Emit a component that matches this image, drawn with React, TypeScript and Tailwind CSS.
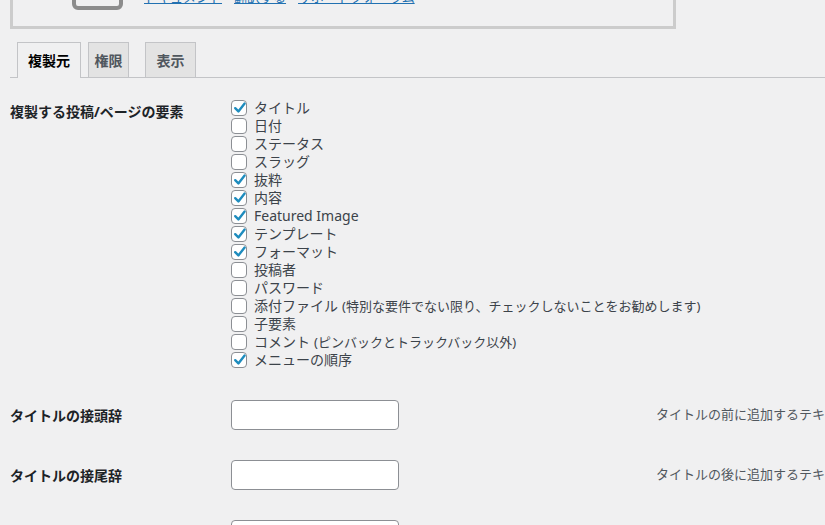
import React from 'react';

const font = { fontFamily: '"Noto Sans", "Noto Sans CJK JP", sans-serif' };

const elements: { label: string; note?: string; checked: boolean }[] = [
  { label: 'タイトル', checked: true },
  { label: '日付', checked: false },
  { label: 'ステータス', checked: false },
  { label: 'スラッグ', checked: false },
  { label: '抜粋', checked: true },
  { label: '内容', checked: true },
  { label: 'Featured Image', checked: true },
  { label: 'テンプレート', checked: true },
  { label: 'フォーマット', checked: true },
  { label: '投稿者', checked: false },
  { label: 'パスワード', checked: false },
  { label: '添付ファイル', note: '(特別な要件でない限り、チェックしないことをお勧めします)', checked: false },
  { label: '子要素', checked: false },
  { label: 'コメント', note: '(ピンバックとトラックバック以外)', checked: false },
  { label: 'メニューの順序', checked: true },
];

function Checkbox({ checked }: { checked: boolean }) {
  return (
    <span className="relative flex h-4 w-4 shrink-0 items-center justify-center rounded-[4px] border border-[#8c8f94] bg-white">
      {checked && (
        <svg viewBox="0 0 16 16" className="absolute -top-[1px] left-0 h-4 w-4">
          <path d="M3.2 8.2 L6.4 11.4 L12.6 3.6" fill="none" stroke="#1e8cbe" strokeWidth="2.4" strokeLinecap="round" strokeLinejoin="round" />
        </svg>
      )}
    </span>
  );
}

function TextRow({ label, desc }: { label: string; desc: string }) {
  return (
    <div className="grid grid-cols-[221px_425px_1fr] items-center">
      <div className="text-[14px] font-bold text-[#1d2327]">{label}</div>
      <div>
        <input type="text" className="block h-[30px] w-[168px] rounded-[4px] border border-[#8c8f94] bg-white" />
      </div>
      <div className="whitespace-nowrap text-[13px] text-[#50575e]">{desc}</div>
    </div>
  );
}

export default function App() {
  return (
    <div className="h-[525px] w-[825px] overflow-hidden bg-[#f0f0f1] pl-[10px]" style={font}>
      {/* Plugin info box (cut off at top) */}
      <div className="-mt-[31px] flex h-[60px] w-[666px] items-end border-[3px] border-[#cccccc] pl-[59px]">
        <div className="mb-[16px] h-[40px] w-[51px] rounded-[6px] border-4 border-[#8c8c8c]" />
        <div className="mb-[21px] ml-[21px] flex gap-[12px] text-[13px] leading-[16px] text-[#2271b1]">
          <a className="underline">ドキュメント</a>
          <a className="underline">翻訳する</a>
          <a className="underline">サポートフォーラム</a>
        </div>
      </div>

      {/* Tabs */}
      <div className="mt-[13px] flex border-b border-[#c3c4c7] pl-[7px]">
        <div className="-mb-px flex h-[36px] w-[64px] items-center justify-center border border-b-0 border-[#c3c4c7] bg-[#f0f0f1] text-[14px] font-bold text-black">
          複製元
        </div>
        <div className="ml-[7px] flex h-[35px] w-[41px] items-center justify-center border border-[#c3c4c7] border-b-0 bg-[#e3e3e3] text-[14px] font-bold text-[#50575e]">
          権限
        </div>
        <div className="ml-[16px] flex h-[35px] w-[51px] items-center justify-center border border-[#c3c4c7] border-b-0 bg-[#e3e3e3] text-[14px] font-bold text-[#50575e]">
          表示
        </div>
      </div>

      {/* Elements to copy */}
      <div className="mt-[21px] grid grid-cols-[221px_1fr]">
        <div className="pt-[3px] text-[14px] font-bold leading-[20px] text-[#1d2327]">複製する投稿/ページの要素</div>
        <div className="flex flex-col">
          {elements.map((el, i) => (
            <label key={i} className="flex h-[18px] items-center gap-[7px] whitespace-nowrap text-[14px] leading-[18px] text-[#3c434a]">
              <Checkbox checked={el.checked} />
              <span>
                {el.label}
                {el.note && <span className="ml-[4px] text-[13px]">{el.note}</span>}
              </span>
            </label>
          ))}
        </div>
      </div>

      {/* Text fields */}
      <div className="mt-[31px] flex flex-col gap-[30px]">
        <TextRow label="タイトルの接頭辞" desc="タイトルの前に追加するテキスト" />
        <TextRow label="タイトルの接尾辞" desc="タイトルの後に追加するテキスト" />
        <TextRow label="タイトルの置換" desc="タイトルの置換するテキスト" />
      </div>
    </div>
  );
}
